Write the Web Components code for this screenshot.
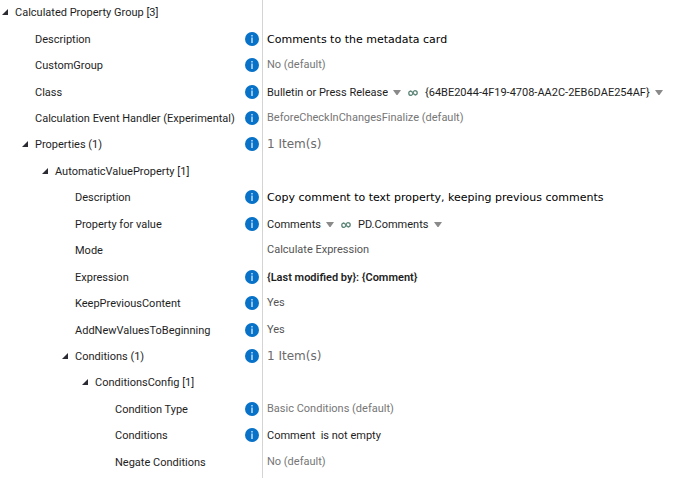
<!DOCTYPE html>
<html lang="en">
<head>
<meta charset="utf-8">
<title>Calculated Property Group</title>
<style>
  body {
    margin: 0;
    background: #fff;
    color: #1e1e1e;
    font-family: Roboto, "Open Sans", sans-serif;
    font-size: 11px;
    line-height: 16px;
  }
</style>
</head>
<body>
<config-tree>
  <config-row level="0" name="Calculated Property Group [3]" open></config-row>
  <config-row level="1" name="Description" info><config-value kind="text">Comments to the metadata card</config-value></config-row>
  <config-row level="1" name="CustomGroup" info><config-value kind="muted">No (default)</config-value></config-row>
  <config-row level="1" name="Class" info>
    <pick-list label="Class" value="Bulletin or Press Release"></pick-list>
    <link-icon></link-icon>
    <pick-list label="Class alias" value="{64BE2044-4F19-4708-AA2C-2EB6DAE254AF}"></pick-list>
  </config-row>
  <config-row level="1" name="Calculation Event Handler (Experimental)" info><config-value kind="muted">BeforeCheckInChangesFinalize (default)</config-value></config-row>
  <config-row level="1" name="Properties (1)" open info><config-value kind="count">1 Item(s)</config-value></config-row>
  <config-row level="2" name="AutomaticValueProperty [1]" open></config-row>
  <config-row level="3" name="Description" info><config-value kind="text">Copy comment to text property, keeping previous comments</config-value></config-row>
  <config-row level="3" name="Property for value" info>
    <pick-list label="Property for value" value="Comments"></pick-list>
    <link-icon></link-icon>
    <pick-list label="Property alias" value="PD.Comments"></pick-list>
  </config-row>
  <config-row level="3" name="Mode"><config-value kind="set">Calculate Expression</config-value></config-row>
  <config-row level="3" name="Expression" info><config-value kind="expression">{Last modified by}: {Comment}</config-value></config-row>
  <config-row level="3" name="KeepPreviousContent" info><config-value kind="set">Yes</config-value></config-row>
  <config-row level="3" name="AddNewValuesToBeginning" info><config-value kind="set">Yes</config-value></config-row>
  <config-row level="3" name="Conditions (1)" open info><config-value kind="count">1 Item(s)</config-value></config-row>
  <config-row level="4" name="ConditionsConfig [1]" open></config-row>
  <config-row level="5" name="Condition Type" info><config-value kind="muted">Basic Conditions (default)</config-value></config-row>
  <config-row level="5" name="Conditions" info><config-value>Comment  is not empty</config-value></config-row>
  <config-row level="5" name="Negate Conditions"><config-value kind="muted">No (default)</config-value></config-row>
</config-tree>

<script>
function makeTemplate(html) {
  const template = document.createElement("template");
  template.innerHTML = html;
  return template;
}

class BaseElement extends HTMLElement {
  constructor() {
    super();
    this.attachShadow({ mode: "open" });
    this.shadowRoot.appendChild(this.constructor.template.content.cloneNode(true));
  }
}

// the whole tree, with the line between names and values
class ConfigTree extends BaseElement {
  static template = makeTemplate(`
    <style>
      :host {
        --name-width: 262px;
        display: grid;
        grid-auto-rows: 1fr;
        box-sizing: border-box;
        min-height: 100vh;
        padding-bottom: 2px;
        background: linear-gradient(#d4d4d4, #d4d4d4) var(--name-width) 0 / 1px 100% no-repeat;
      }
    </style>
    <slot></slot>
  `);
}

// one property: name, info button and slotted value
class ConfigRow extends BaseElement {
  static template = makeTemplate(`
    <style>
      :host {
        display: grid;
        grid-template-columns: var(--name-width) 1fr;
        align-items: center;
        min-height: 26px;
      }
      .name {
        display: flex;
        align-items: center;
        padding-right: 3px;
        white-space: nowrap;
      }
      .toggle {
        display: flex;
        box-sizing: border-box;
        width: 15px;
        height: 16px;
        padding: 4px 0 0 2px;
        border: 0;
        background: none;
      }
      .label {
        flex: 1;
      }
      .value {
        display: flex;
        align-items: center;
        padding-left: 5px;
      }
    </style>
    <div class="name">
      <button class="toggle" aria-expanded="true">
        <svg width="6" height="6" viewBox="0 0 6 6"><path d="M6 0V6H0Z" fill="#2b2b33"/></svg>
      </button>
      <span class="label"></span>
      <info-button></info-button>
    </div>
    <div class="value"><slot></slot></div>
  `);

  connectedCallback() {
    const name = this.getAttribute("name");
    const indent = Number(this.getAttribute("level")) * 20;
    const root = this.shadowRoot;
    const toggle = root.querySelector(".toggle");

    root.querySelector(".label").textContent = name;

    if (this.hasAttribute("open")) {
      root.querySelector(".name").style.paddingLeft = indent + "px";
      toggle.setAttribute("aria-label", name);
    } else {
      // no arrow, so keep its 15px free
      root.querySelector(".name").style.paddingLeft = indent + 15 + "px";
      toggle.remove();
    }

    if (!this.hasAttribute("info")) {
      root.querySelector("info-button").remove();
    }
  }
}

// round blue help button
class InfoButton extends BaseElement {
  static template = makeTemplate(`
    <style>
      :host {
        display: block;
      }
      button {
        display: block;
        padding: 0 0 2px;
        border: 0;
        background: none;
      }
      svg {
        display: block;
      }
    </style>
    <button aria-label="Info">
      <svg width="14" height="14" viewBox="0 0 14 14">
        <circle cx="7" cy="7" r="7" fill="#0872c9"/>
        <path d="M6.3 3H7.7V4.5H6.3ZM6.3 5.6H7.7V11H6.3Z" fill="#cfe6f8"/>
      </svg>
    </button>
  `);
}

// plain value text
class ConfigValue extends BaseElement {
  static template = makeTemplate(`
    <style>
      :host {
        display: block;
      }
      :host([kind="text"]) {
        color: #000;
        font-family: "DejaVu Sans", sans-serif;
      }
      :host([kind="count"]) {
        color: #6b6b6b;
        font-family: "DejaVu Sans", sans-serif;
        font-size: 12px;
        padding-bottom: 2px;
      }
      :host([kind="muted"]) {
        color: #767676;
        padding-bottom: 2px;
      }
      :host([kind="set"]) {
        color: #555;
        padding-bottom: 2px;
      }
      :host([kind="expression"]) {
        font-weight: 600;
      }
      slot {
        white-space: pre-wrap;
      }
    </style>
    <slot></slot>
  `);
}

// drop-down without a frame
class PickList extends BaseElement {
  static template = makeTemplate(`
    <style>
      :host {
        display: grid;
        align-items: center;
      }
      select {
        grid-area: 1 / 1;
        appearance: none;
        margin: 0;
        padding: 0 13px 0 0;
        border: 0;
        background: none;
        color: inherit;
        font: inherit;
      }
      svg {
        grid-area: 1 / 1;
        justify-self: end;
        pointer-events: none;
      }
    </style>
    <select><option></option></select>
    <svg width="8" height="6" viewBox="0 0 8 6"><path d="M0 0H8L4.5 5H3.5Z" fill="#8a8a8a"/></svg>
  `);

  connectedCallback() {
    const select = this.shadowRoot.querySelector("select");
    select.setAttribute("aria-label", this.getAttribute("label"));
    select.options[0].textContent = this.getAttribute("value");
  }
}

class LinkIcon extends BaseElement {
  static template = makeTemplate(`
    <style>
      :host {
        display: block;
        padding: 0 7px;
      }
      svg {
        display: block;
      }
    </style>
    <svg width="10" height="8" viewBox="0 0 10 8" fill="none" stroke="#5c8577" stroke-width="1.3" stroke-linecap="round">
      <path d="M3.2 6.4C1.4 6.4.8 5.4.8 4.2C.8 3 1.5 2.2 2.6 2.2M3.2 6.4C5.4 6.4 4.6 1.6 6.8 1.6C8.6 1.6 9.2 2.6 9.2 3.8C9.2 5 8.5 5.8 7.4 5.8"/>
      <path d="M2.6 2.2C3.8 2.2 4.3 3 4.3 3.6M7.4 5.8C6.2 5.8 5.7 5 5.7 4.4"/>
    </svg>
  `);
}

customElements.define("info-button", InfoButton);
customElements.define("config-value", ConfigValue);
customElements.define("pick-list", PickList);
customElements.define("link-icon", LinkIcon);
customElements.define("config-row", ConfigRow);
customElements.define("config-tree", ConfigTree);
</script>
</body>
</html>
